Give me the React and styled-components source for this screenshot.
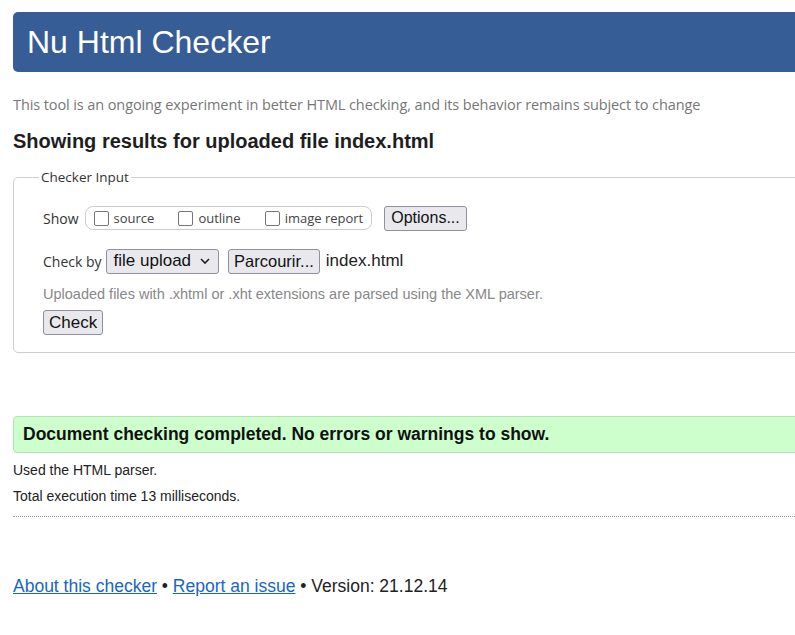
import React from "react";
import styled, { createGlobalStyle } from "styled-components";

const GlobalStyle = createGlobalStyle`
  html, body {
    margin: 0;
    padding: 0;
    overflow: hidden;
    background: #fff;
  }
  body {
    font-family: "Liberation Sans", Arial, sans-serif;
    color: #222;
  }
`;

const Page = styled.div`
  padding: 12px 0 0 13px;
  margin-right: -40px;
`;

const Header = styled.header`
  height: 60px;
  background: #365d96;
  border-radius: 5px 0 0 5px;
  display: flex;
  align-items: center;
  padding-left: 14px;
  h1 {
    margin: 0;
    font-size: 32px;
    font-weight: normal;
    color: #fff;
    line-height: 1;
  }
`;

const Tagline = styled.p`
  margin: 23px 0 0;
  font-family: "Open Sans", "Noto Sans", sans-serif;
  font-size: 14.5px;
  color: #777;
  letter-spacing: -0.1px;
`;

const Heading = styled.h2`
  margin: 16px 0 0;
  font-size: 20px;
  font-weight: bold;
  color: #1e1e1e;
`;

const Fieldset = styled.fieldset`
  margin: 15px 0 0;
  border: 1px solid #cfcfcf;
  border-radius: 5px 0 0 5px;
  padding: 19px 29px 17px 29px;
  min-width: 0;
  legend {
    font-family: "Open Sans", "Noto Sans", sans-serif;
    font-size: 13.5px;
    color: #333;
    padding: 0 2px;
    margin-left: -4px;
  }
`;

const Row = styled.div`
  display: flex;
  align-items: center;
  gap: 9px;
  height: 26px;
  margin-bottom: ${(p) => p.$mb || 0}px;
`;

const Label = styled.span`
  font-family: "Open Sans", "Noto Sans", sans-serif;
  font-size: 14px;
  color: #333;
`;

const Pill = styled.div`
  display: flex;
  align-items: center;
  height: 22px;
  border: 1px solid #ccc;
  border-radius: 8px;
  padding: 0 8px 0 8px;
  margin-left: -3px;
  gap: 24px;
`;

const Check = styled.label`
  display: flex;
  align-items: center;
  gap: 5px;
  font-family: "Open Sans", "Noto Sans", sans-serif;
  font-size: 13px;
  color: #444;
`;

const Box = styled.span`
  width: 13px;
  height: 13px;
  border: 1px solid #767676;
  border-radius: 2px;
  background: #fff;
`;

const Button = styled.button`
  font-family: "Liberation Sans", Arial, sans-serif;
  font-size: ${(p) => p.$size || 16}px;
  color: #111;
  background: #e9e9ed;
  border: 1px solid #8f8f9d;
  border-radius: 3px;
  height: 25px;
  padding: 0 ${(p) => p.$pad || 6}px;
  display: inline-flex;
  align-items: center;
  gap: 8px;
  margin-left: ${(p) => p.$ml || 0}px;
`;

const FileName = styled.span`
  font-size: 17px;
  color: #222;
  margin-left: -3px;
`;

const Hint = styled.p`
  margin: 12px 0 8px;
  font-size: 14.5px;
  color: #888;
`;

const Success = styled.div`
  margin-top: 63px;
  height: 35px;
  display: flex;
  align-items: center;
  padding-left: 9px;
  background: #ccffcc;
  border: 1px solid #b8e0b8;
  border-radius: 4px 0 0 4px;
  font-size: 17.5px;
  font-weight: bold;
  color: #111;
`;

const Detail = styled.p`
  margin: ${(p) => p.$top || 0}px 0 0;
  font-size: 14px;
  color: #222;
  line-height: 26px;
`;

const Rule = styled.hr`
  margin: 7px 0 0;
  border: 0;
  border-top: 1px dotted #999;
`;

const Footer = styled.p`
  margin: 59px 0 0;
  font-size: 17.5px;
  color: #222;
  a {
    color: #1766c5;
    text-decoration: underline;
  }
`;

const Chevron = () => (
  <svg width="12" height="8" viewBox="0 0 12 8">
    <path d="M2 2l4 4 4-4" fill="none" stroke="#222" strokeWidth="1.6" />
  </svg>
);

export default function App() {
  return (
    <>
      <GlobalStyle />
      <Page>
        <Header>
          <h1>Nu Html Checker</h1>
        </Header>
        <Tagline>
          This tool is an ongoing experiment in better HTML checking, and its
          behavior remains subject to change
        </Tagline>
        <Heading>Showing results for uploaded file index.html</Heading>
        <Fieldset>
          <legend>Checker Input</legend>
          <Row $mb={17}>
            <Label>Show</Label>
            <Pill>
              <Check>
                <Box />
                source
              </Check>
              <Check>
                <Box />
                outline
              </Check>
              <Check>
                <Box />
                image report
              </Check>
            </Pill>
            <Button $ml={3}>Options...</Button>
          </Row>
          <Row>
            <Label>Check by</Label>
            <Button $ml={-5} $size={17} $pad={7}>
              file upload <Chevron />
            </Button>
            <Button $size={16.5} $pad={5}>Parcourir...</Button>
            <FileName>index.html</FileName>
          </Row>
          <Hint>Uploaded files with .xhtml or .xht extensions are parsed using the XML parser.</Hint>
          <Button $size={17} $pad={5}>Check</Button>
        </Fieldset>
        <Success>Document checking completed. No errors or warnings to show.</Success>
        <Detail $top={4}>Used the HTML parser.</Detail>
        <Detail>Total execution time 13 milliseconds.</Detail>
        <Rule />
        <Footer>
          <a href="#">About this checker</a> • <a href="#">Report an issue</a> • Version: 21.12.14
        </Footer>
      </Page>
    </>
  );
}
